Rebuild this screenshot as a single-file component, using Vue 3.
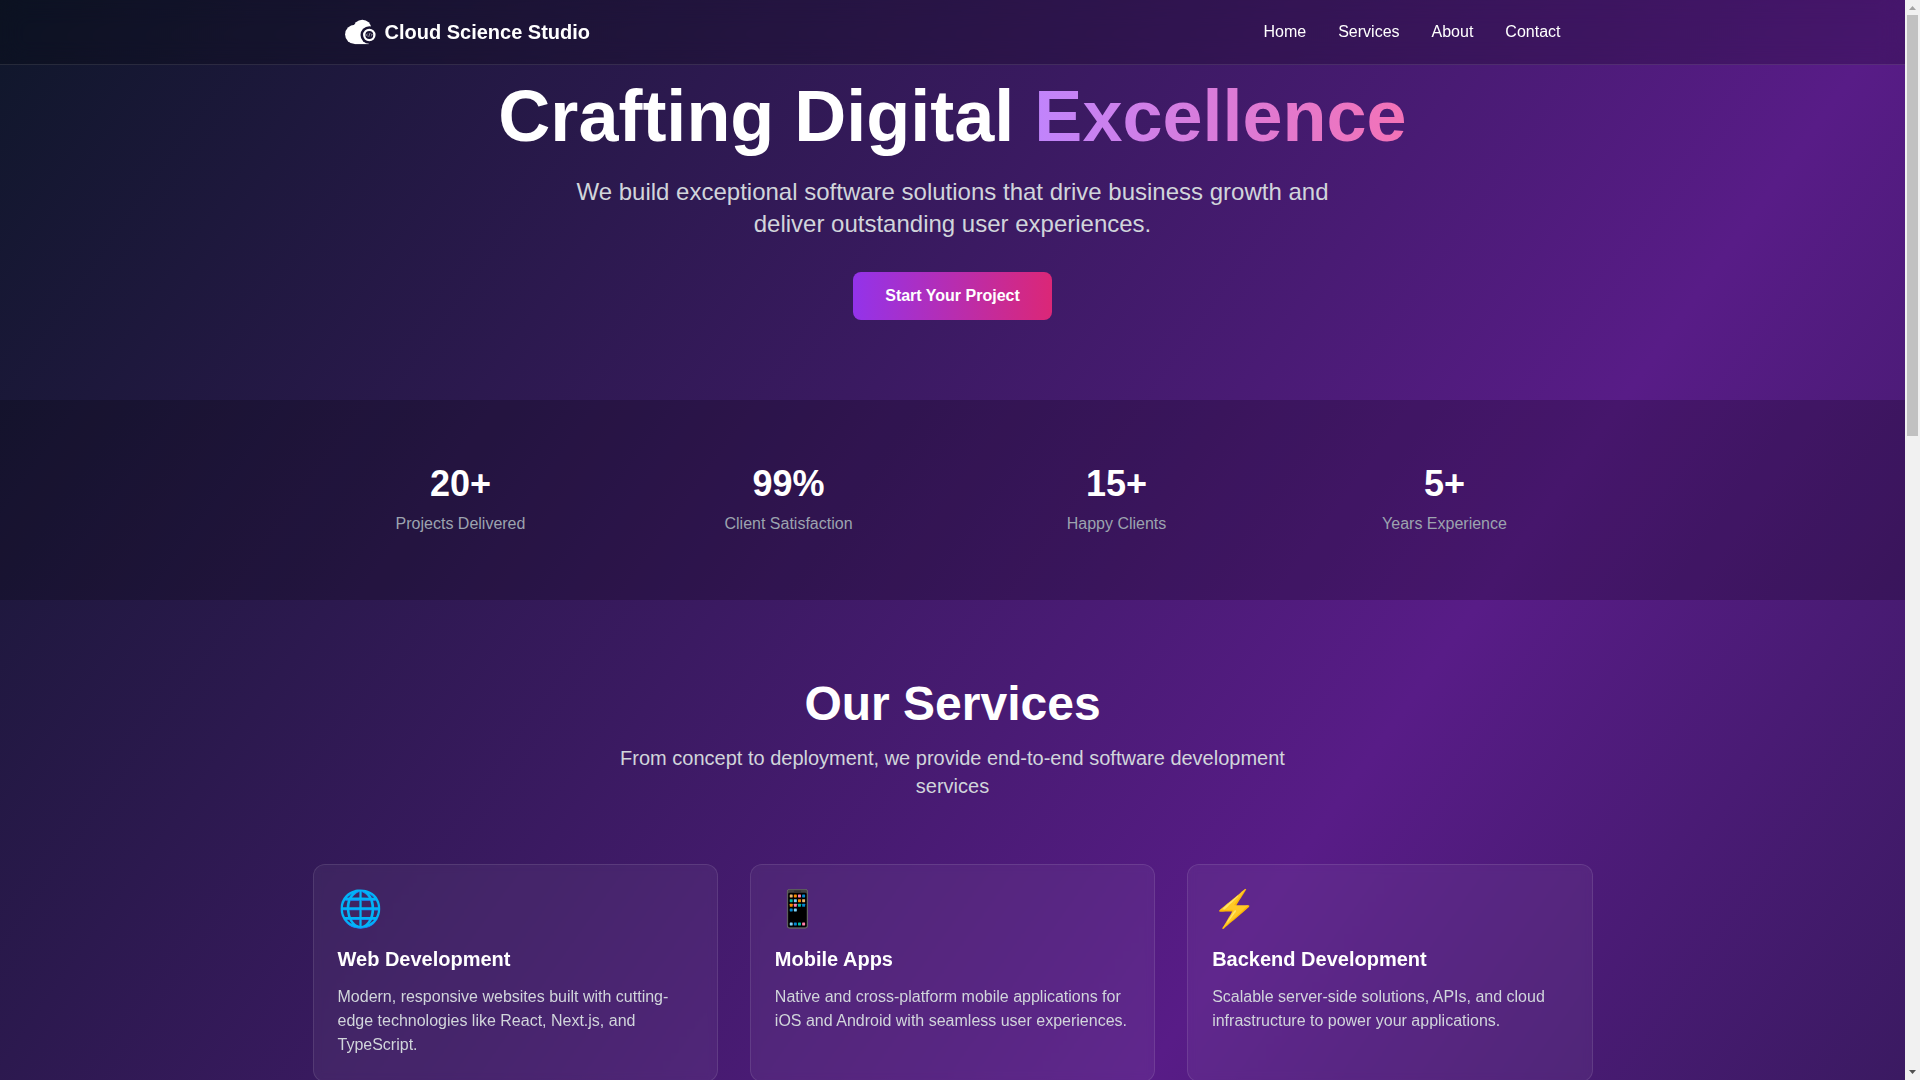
<script setup>
const links = ['Home', 'Services', 'About', 'Contact']

const stats = [
  { value: '20+', label: 'Projects Delivered' },
  { value: '99%', label: 'Client Satisfaction' },
  { value: '15+', label: 'Happy Clients' },
  { value: '5+', label: 'Years Experience' },
]

const services = [
  {
    icon: '🌐',
    title: 'Web Development',
    text: 'Modern, responsive websites built with cutting-edge technologies like React, Next.js, and TypeScript.',
  },
  {
    icon: '📱',
    title: 'Mobile Apps',
    text: 'Native and cross-platform mobile applications for iOS and Android with seamless user experiences.',
  },
  {
    icon: '⚡',
    title: 'Backend Development',
    text: 'Scalable server-side solutions, APIs, and cloud infrastructure to power your applications.',
  },
]
</script>

<template>
  <div class="window">
    <div class="viewport">
      <div class="page">
        <nav class="nav">
          <div class="nav-inner">
            <div class="brand">
              <svg class="brand-logo" viewBox="0 0 32 32" aria-hidden="true">
                <mask id="logo-cut">
                  <rect width="32" height="32" fill="#fff" />
                  <circle cx="24.3" cy="19" r="8.8" fill="#000" />
                </mask>
                <g fill="#fff" mask="url(#logo-cut)">
                  <circle cx="9.8" cy="18.4" r="9.7" />
                  <circle cx="17.3" cy="12.7" r="9" />
                  <rect x="9.8" y="14" width="14" height="14.1" />
                </g>
                <circle cx="24.3" cy="19" r="5.1" fill="none" stroke="#fff" stroke-width="2.3" />
                <path
                  d="M22.7 17.6 21.3 19 22.7 20.4M25.9 17.6 27.3 19 25.9 20.4M24.8 17.2 23.8 20.8"
                  fill="none"
                  stroke="#fff"
                  stroke-opacity="0.8"
                  stroke-width="0.7"
                />
              </svg>
              <span class="brand-name">Cloud Science Studio</span>
            </div>
            <div class="nav-links">
              <a v-for="link in links" :key="link" class="nav-link">{{ link }}</a>
            </div>
          </div>
        </nav>

        <section class="hero">
          <h1 class="hero-title">Crafting Digital <span class="hero-accent">Excellence</span></h1>
          <p class="hero-text">
            We build exceptional software solutions that drive business growth and deliver outstanding user experiences.
          </p>
          <button class="hero-button" type="button">Start Your Project</button>
        </section>

        <section class="stats">
          <div class="stats-grid">
            <div v-for="stat in stats" :key="stat.label" class="stat">
              <div class="stat-value">{{ stat.value }}</div>
              <div class="stat-label">{{ stat.label }}</div>
            </div>
          </div>
        </section>

        <section class="services">
          <div class="services-head">
            <h2 class="services-title">Our Services</h2>
            <p class="services-text">
              From concept to deployment, we provide end-to-end software development services
            </p>
          </div>
          <div class="services-grid">
            <article v-for="service in services" :key="service.title" class="card">
              <div class="card-icon">{{ service.icon }}</div>
              <h3 class="card-title">{{ service.title }}</h3>
              <p class="card-text">{{ service.text }}</p>
            </article>
          </div>
        </section>
      </div>
    </div>

    <div class="scrollbar" aria-hidden="true">
      <svg class="scrollbar-arrow" viewBox="0 0 15 15">
        <path d="M4 10 7.5 6 11 10Z" fill="#a3a3a3" />
      </svg>
      <div class="scrollbar-thumb"></div>
      <svg class="scrollbar-arrow scrollbar-arrow--down" viewBox="0 0 15 15">
        <path d="M4 5 11 5 7.5 9Z" fill="#505050" />
      </svg>
    </div>
  </div>
</template>

<style>
body {
  margin: 0;
  overflow: hidden;
}
</style>

<style scoped>
.window {
  display: flex;
  height: 100vh;
  overflow: hidden;
  font-family: 'Liberation Sans', Arial, 'Noto Color Emoji', sans-serif;
  font-size: 16px;
  line-height: 24px;
  color: #ffffff;
}

.viewport {
  flex: 1;
  min-width: 0;
  overflow: hidden;
}

.page {
  box-sizing: border-box;
  min-height: 2694px;
  background: linear-gradient(to bottom right, #0f172a, #581c87, #0f172a);
}

h1,
h2,
h3,
p {
  margin: 0;
}

/* nav floats over the top padding of the hero */
.nav {
  position: fixed;
  top: 0;
  left: 0;
  right: 15px;
  z-index: 10;
  background: rgba(0, 0, 0, 0.2);
  border-bottom: 1px solid rgba(255, 255, 255, 0.1);
  backdrop-filter: blur(12px);
}

.nav-inner {
  box-sizing: border-box;
  max-width: 1280px;
  height: 64px;
  margin: 0 auto;
  padding: 0 32px;
  display: flex;
  align-items: center;
  justify-content: space-between;
}

.brand {
  display: flex;
  align-items: center;
  gap: 8px;
}

.brand-logo {
  width: 32px;
  height: 32px;
}

.brand-name {
  font-size: 20px;
  line-height: 28px;
  font-weight: 700;
}

.nav-links {
  display: flex;
  gap: 32px;
}

.hero {
  padding: 80px 32px;
  display: flex;
  flex-direction: column;
  align-items: center;
  text-align: center;
}

.hero-title {
  margin-bottom: 24px;
  font-size: 72px;
  line-height: 72px;
  font-weight: 700;
}

.hero-accent {
  background: linear-gradient(to right, #c084fc, #f472b6);
  background-clip: text;
  -webkit-background-clip: text;
  color: transparent;
}

.hero-text {
  max-width: 768px;
  margin-bottom: 32px;
  font-size: 24px;
  line-height: 32px;
  color: #d1d5db;
}

.hero-button {
  padding: 12px 32px;
  border: 0;
  border-radius: 8px;
  background: linear-gradient(to right, #9333ea, #db2777);
  font-family: inherit;
  font-size: 16px;
  line-height: 24px;
  font-weight: 600;
  color: #ffffff;
}

.stats {
  padding: 64px 32px;
  background: rgba(0, 0, 0, 0.2);
}

.stats-grid {
  max-width: 1280px;
  margin: 0 auto;
  display: grid;
  grid-template-columns: repeat(4, 1fr);
  gap: 32px;
  text-align: center;
}

.stat-value {
  margin-bottom: 8px;
  font-size: 36px;
  line-height: 40px;
  font-weight: 700;
}

.stat-label {
  color: #9ca3af;
}

.services {
  padding: 80px 32px;
}

.services-head {
  margin-bottom: 64px;
  text-align: center;
}

.services-title {
  margin-bottom: 16px;
  font-size: 48px;
  line-height: 48px;
  font-weight: 700;
}

.services-text {
  max-width: 672px;
  margin: 0 auto;
  font-size: 20px;
  line-height: 28px;
  color: #d1d5db;
}

.services-grid {
  max-width: 1280px;
  margin: 0 auto;
  display: grid;
  grid-template-columns: repeat(3, 1fr);
  gap: 32px;
}

.card {
  padding: 24px;
  border: 1px solid rgba(255, 255, 255, 0.1);
  border-radius: 12px;
  background: rgba(255, 255, 255, 0.05);
  backdrop-filter: blur(4px);
}

.card-icon {
  margin-bottom: 16px;
  padding-left: 0.5px;
  font-size: 36px;
  line-height: 40px;
}

.card-title {
  margin-bottom: 12px;
  font-size: 20px;
  line-height: 28px;
  font-weight: 600;
}

.card-text {
  color: #d1d5db;
}

.scrollbar {
  width: 15px;
  flex: none;
  display: flex;
  flex-direction: column;
  align-items: center;
  background: #f1f1f1;
}

.scrollbar-arrow {
  width: 15px;
  height: 15px;
  flex: none;
}

.scrollbar-arrow--down {
  margin-top: auto;
}

.scrollbar-thumb {
  width: 11px;
  height: 421px;
  background: #c1c1c1;
}
</style>
